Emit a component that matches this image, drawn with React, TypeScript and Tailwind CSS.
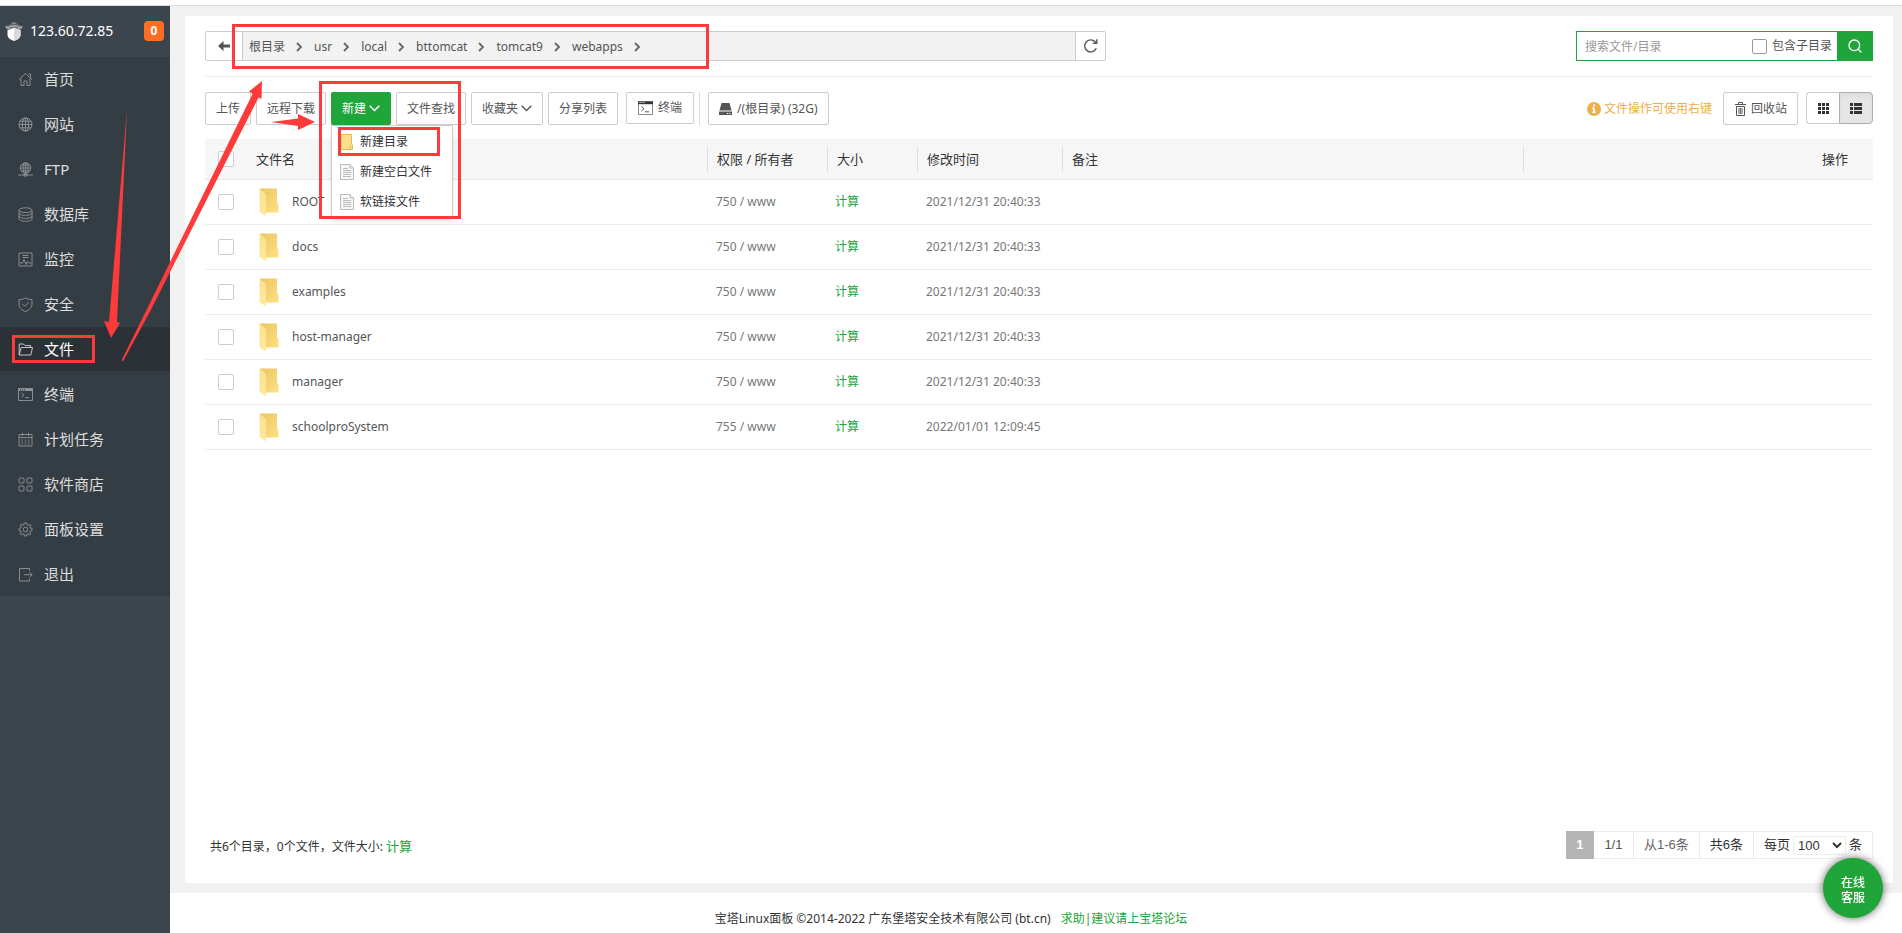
import React from 'react';
import { Search } from 'lucide-react';

interface MenuItem {
  label: string;
  icon: React.ReactNode;
  active?: boolean;
}

const menuItems: MenuItem[] = [
  { label: '首页', icon: <path d="M1 7.5 7.5 1.5 14 7.5M3 6.5V13.5H6V9H9V13.5H12V6.5M10.5 2H12.5V5.5" /> },
  {
    label: '网站',
    icon: (
      <>
        <circle cx="7.5" cy="7.5" r="6.5" />
        <ellipse cx="7.5" cy="7.5" rx="3.2" ry="6.5" />
        <path d="M7.5 1V14M1 7.5H14M2 4.2H13M2 10.8H13" />
      </>
    ),
  },
  {
    label: 'FTP',
    icon: (
      <>
        <circle cx="7.5" cy="6" r="5.2" />
        <ellipse cx="7.5" cy="6" rx="2.5" ry="5.2" />
        <path d="M7.5 1V11M2.3 6H12.7M3.2 3.2H11.8M3.2 8.8H11.8M0 13H15M6 12H9V14H6Z" />
      </>
    ),
  },
  {
    label: '数据库',
    icon: (
      <>
        <ellipse cx="7.5" cy="3.2" rx="6.5" ry="2.4" />
        <path d="M1 3.2V12C1 13.3 3.9 14.3 7.5 14.3S14 13.3 14 12V3.2M1 6.1C1 7.4 3.9 8.4 7.5 8.4S14 7.4 14 6.1M1 9C1 10.3 3.9 11.4 7.5 11.4S14 10.3 14 9" />
      </>
    ),
  },
  { label: '监控', icon: <path d="M1 1H14V14H1ZM4.5 3.5H10.5M4.5 5.5H10.5M2 11H4.5L6 7.5 8 12.5 9.5 9.5 10.5 11H13" /> },
  { label: '安全', icon: <path d="M7.5 .8C9.5 2.2 11.5 2.6 14 2.6V7C14 10.5 11.5 13 7.5 14.5 3.5 13 1 10.5 1 7V2.6C3.5 2.6 5.5 2.2 7.5 .8ZM4.5 7 6.8 9.3 10.8 5.3" /> },
  { label: '文件', active: true, icon: <path d="M1.2 13V2H5.5L7 3.6H12.6V5.5M1.2 13 3.2 5.5H14.5L12.8 13Z" /> },
  {
    label: '终端',
    icon: (
      <>
        <path d="M.5 1.5H14.5V13.5H.5ZM3.5 6 6 8.2 3.5 10.4M7 10.6H11" />
        <path d="M.5 2.8H14.5" strokeWidth="2.4" strokeDasharray="1.5 .7 1.5 .7 1.5 .7 20" />
      </>
    ),
  },
  { label: '计划任务', icon: <path d="M1 2.5H14V14H1ZM1 5.5H14M4.5 .8V4M10.5 .8V4M3.5 8H5M6.8 8H8.3M10 8H11.5M3.5 10H5M6.8 10H8.3M10 10H11.5M3.5 12H5M6.8 12H8.3M10 12H11.5" /> },
  {
    label: '软件商店',
    icon: (
      <>
        <rect x="1" y="1" width="5" height="5" rx="1" />
        <rect x="9" y="1" width="5" height="5" rx="1" />
        <rect x="1" y="9" width="5" height="5" rx="1" />
        <rect x="9" y="9" width="5" height="5" rx="1" />
      </>
    ),
  },
  {
    label: '面板设置',
    icon: (
      <>
        <circle cx="7.5" cy="7.5" r="2.3" />
        <path d="M6.3 1H8.7L9.1 3 10.3 3.5 12 2.3 13 3.3 11.9 5 12.2 6 14 6.3V8.7L12.2 9.1 11.7 10.2 12.8 12 11.6 13 10 11.8 8.9 12.3 8.6 14H6.4L6 12.2 4.8 11.7 3.2 12.8 2.1 11.7 3.2 10 2.8 8.9 1 8.6V6.4L2.8 6 3.3 4.8 2.1 3.2 3.3 2.1 5 3.2 5.9 2.8Z" />
      </>
    ),
  },
  { label: '退出', icon: <path d="M11.5 4V1.5H1.5V14H11.5V11.5M6 7.7H14M11.5 5 14 7.7 11.5 10.4" /> },
];

const crumbs = ['根目录', 'usr', 'local', 'bttomcat', 'tomcat9', 'webapps'];

const files = [
  { name: 'ROOT', owner: '750 / www', time: '2021/12/31 20:40:33' },
  { name: 'docs', owner: '750 / www', time: '2021/12/31 20:40:33' },
  { name: 'examples', owner: '750 / www', time: '2021/12/31 20:40:33' },
  { name: 'host-manager', owner: '750 / www', time: '2021/12/31 20:40:33' },
  { name: 'manager', owner: '750 / www', time: '2021/12/31 20:40:33' },
  { name: 'schoolproSystem', owner: '755 / www', time: '2022/01/01 12:09:45' },
];

const BTN = 'h-[33px] px-[10px] border border-[#ccc] rounded-xs bg-white text-xs text-[#555] flex items-center whitespace-nowrap';
const CHECKBOX = 'block appearance-none size-4 border border-[#ccc] rounded-xs bg-white checked:bg-[#20a53a]';

const CrumbArrow = () => (
  <svg className="w-[13px] h-[10px] mx-2" viewBox="0 0 13 10" fill="none" stroke="#666" strokeWidth="1.8">
    <path d="M4 1 8 5 4 9" />
  </svg>
);

const DownArrow = () => (
  <svg className="w-[11px] h-[7px]" viewBox="0 0 11 7" fill="none" stroke="currentColor" strokeWidth="1.4">
    <path d="M.7 .8 5.5 5.6 10.3 .8" />
  </svg>
);

const TerminalIcon = () => (
  <svg className="w-[15px] h-[14px]" viewBox="0 0 15 14" fill="none" stroke="#555">
    <path d="M.5 1.5V13.5H14.5V1.5" stroke="#888" />
    <path d="M0 1.7H15" stroke="#333" strokeWidth="3" />
    <path d="M1.5 1.5H2.5M3.5 1.5H4.5M5.5 1.5H6.5" stroke="#fff" />
    <path d="M3.5 5.5 6 7.7 3.5 10M7 10.8H11" />
  </svg>
);

const FolderIcon = () => (
  <svg className="w-5 h-[29px] mt-px shrink-0" viewBox="0 0 20 29">
    <defs>
      <linearGradient id="folderBack" x1="0" y1="0" x2="1" y2="1">
        <stop offset="0" stopColor="#ebc55e" />
        <stop offset="1" stopColor="#fee084" />
      </linearGradient>
      <linearGradient id="folderFront" x1="0" y1="0" x2="0" y2="1">
        <stop offset="0" stopColor="#fce08c" />
        <stop offset="1" stopColor="#ffeaa0" />
      </linearGradient>
    </defs>
    <path d="M1 .5H18V14.5L19.5 17V24.5H6Z" fill="url(#folderBack)" />
    <path d="M.5 .5 7 6V28.5L.5 24Z" fill="url(#folderFront)" />
  </svg>
);

const DocIcon = () => (
  <svg className="w-[14px] h-4" viewBox="0 0 14 16" fill="none" stroke="#bbb">
    <path d="M.5 .5H10L13.5 4V15.5H.5Z" fill="#f7f7f7" />
    <path d="M10 .5V4H13.5M3 4.5H8M3 6.5H11M3 8.5H11M3 10.5H11M3 12.5H11" />
  </svg>
);

const SmallFolderIcon = () => (
  <svg className="w-[14px] h-4" viewBox="0 0 14 16">
    <path d="M1 .5H11.5V10L12.5 11V15.5H1Z" fill="#fde18c" stroke="#e2bd55" />
    <path d="M10.5 11V15" stroke="#e2bd55" />
  </svg>
);

const Sidebar = () => (
  <aside className="w-[170px] shrink-0 bg-[#3c444d]">
    <div className="h-[51px] flex items-center pl-[5px] pr-[6px] pb-3">
      <svg className="w-[18px] h-[19px] mt-3" viewBox="0 0 18 19">
        <path d="M0 4.5 5 2.5 9 0 13 2.5 18 4.5 16.5 7H1.5Z" fill="#989da2" />
        <path d="M2 4 9 2 16 4M5 6H13" stroke="#4b525a" fill="none" />
        <path d="M2.5 8 9 6 15.5 8V13C15.5 16 12 18 9 19 6 18 2.5 16 2.5 13Z" fill="#fff" />
        <path d="M9 6 15.5 8V13C15.5 16 12 18 9 19Z" fill="#d9dadb" />
      </svg>
      <span className="pl-[7px] pt-[10px] grow text-sm text-white">123.60.72.85</span>
      <span className="mt-[10px] size-5 rounded bg-[#ff6c23] text-white text-xs font-bold flex items-center justify-center">0</span>
    </div>
    <nav className="bg-[#353d44]">
      <ul className="flex flex-col gap-px">
        {menuItems.map((item) => (
          <li key={item.label}>
            <a
              href="#"
              className={`h-11 flex items-center gap-[11px] pl-[18px] text-[15px] ${item.active ? 'bg-[#2c3138] text-white' : 'text-[#ddd]'}`}
            >
              <svg
                className="size-[15px]"
                viewBox="0 0 15 15"
                fill="none"
                stroke={item.active ? '#d5d7d9' : '#91969a'}
                strokeWidth={0.9}
              >
                {item.icon}
              </svg>
              {item.label}
            </a>
          </li>
        ))}
      </ul>
    </nav>
  </aside>
);

const PathBar = () => (
  <div className="flex justify-between pb-[15px] border-b border-[#eee]">
    <div className="flex h-[30px] w-[901px] border border-[#ccc] rounded-xs">
      <button aria-label="后退" className="w-[37px] flex items-center justify-center border-r border-[#ccc]">
        <svg className="w-3 h-[10px]" viewBox="0 0 12 10">
          <path d="M0 5 5.5 0V3.5H12V6.5H5.5V10Z" fill="#555" />
        </svg>
      </button>
      <div className="grow flex items-center bg-[#f2f2f2] pl-[6px] pt-px text-xs text-[#555]">
        {crumbs.map((crumb) => (
          <a key={crumb} href="#" className="flex items-center">
            {crumb}
            <CrumbArrow />
          </a>
        ))}
      </div>
      <button aria-label="刷新" className="w-[30px] flex items-center justify-center border-l border-[#ccc]">
        <svg className="size-[14px]" viewBox="0 0 14 14" fill="none" stroke="#555" strokeWidth="1.4">
          <path d="M12.3 9.2A6 6 0 1 1 11 2.6L12.6 4" />
          <path d="M12.8 .3V4.3H8.8" />
        </svg>
      </button>
    </div>
    <div className="flex h-[30px] border border-[#20a53a] text-xs text-[#555]">
      <input
        aria-label="搜索"
        placeholder="搜索文件/目录"
        className="w-[175px] pl-2 pt-px outline-none placeholder:text-[#999]"
      />
      <label className="flex items-center gap-[5px] pr-[5px]">
        <input type="checkbox" className="appearance-none size-[15px] border border-[#999] rounded-xs checked:bg-[#20a53a]" />
        包含子目录
      </label>
      <button aria-label="搜索" className="w-[35px] bg-[#20a53a] text-white flex items-center justify-center">
        <Search className="size-4" strokeWidth={2} />
      </button>
    </div>
  </div>
);

const Toolbar = () => (
  <div className="flex justify-between pt-[15px] pb-[14px]">
    <div className="flex gap-[5px]">
      <button className={BTN}>上传</button>
      <button className={BTN}>远程下载</button>
      <div className="relative">
        <button className="h-[33px] px-[11px] rounded-xs bg-[#20a53a] text-white text-xs flex items-center gap-[3px]">
          新建
          <DownArrow />
        </button>
        {/* menu opened by the button above */}
        <ul className="absolute z-10 top-[33px] left-0 w-[122px] pt-px border border-[#ccc] bg-white shadow-md text-xs text-[#333]">
          <li className="h-[30px]">
            <a href="#" className="h-full pl-2 flex items-center gap-[6px]"><SmallFolderIcon />新建目录</a>
          </li>
          <li className="h-[30px]">
            <a href="#" className="h-full pl-2 flex items-center gap-[6px]"><DocIcon />新建空白文件</a>
          </li>
          <li className="h-[30px]">
            <a href="#" className="h-full pl-2 flex items-center gap-[6px]"><DocIcon />软链接文件</a>
          </li>
        </ul>
      </div>
      <button className={BTN}>文件查找</button>
      <button className={`${BTN} gap-[3px]`}>
        收藏夹
        <DownArrow />
      </button>
      <button className={BTN}>分享列表</button>
      <button className="ml-[3px] h-8 px-[11px] border border-[#ccc] rounded-xs text-xs text-[#555] flex items-center gap-[5px]">
        <TerminalIcon />
        终端
      </button>
      <span className="w-px bg-[#ddd]" />
      <button className={`${BTN} ml-[3px] gap-[5px]`}>
        <svg className="w-[13px] h-3" viewBox="0 0 13 12" fill="#555">
          <path d="M2.5 0H10.5L12.5 7.5H.5Z" />
          <path d="M0 8.5H13V12H0ZM8 10H9.2V10.9H8ZM10.2 10H11.4V10.9H10.2Z" fillRule="evenodd" />
        </svg>
        /(根目录) (32G)
      </button>
    </div>
    <div className="flex">
      <span className="flex items-center gap-[3px] pr-[11px] pt-px text-xs text-[#f0ad4e]">
        <svg className="size-[14px]" viewBox="0 0 14 14">
          <circle cx="7" cy="7" r="7" fill="#f0ad4e" />
          <path d="M6 2.5H8V4.300H6ZM5 5.500H8V9.700H9V11H5V9.700H6V6.800H5Z" fill="#fff" />
        </svg>
        文件操作可使用右键
      </span>
      <button className={`${BTN} gap-1`}>
        <svg className="w-[13px] h-[14px]" viewBox="0 0 13 14" fill="none" stroke="#555">
          <path d="M4.500 2.500V.5H8.500V2.500M1 2.500H12M2.500 4.500H10.500V13.500H2.500ZM5 6V12M8 6V12" />
          <path d="M6.500 6V12" strokeWidth=".8" />
        </svg>
        回收站
      </button>
      <div className="ml-2 flex h-8">
        <button aria-label="网格视图" className="w-[33px] border border-r-0 border-[#ccc] rounded-l flex items-center justify-center">
          <svg className="size-[11px]" viewBox="0 0 11 11" fill="#333">
            <path d="M0 0H3V3H0ZM4 0H7V3H4ZM8 0H11V3H8ZM0 4H3V7H0ZM4 4H7V7H4ZM8 4H11V7H8ZM0 8H3V11H0ZM4 8H7V11H4ZM8 8H11V11H8Z" />
          </svg>
        </button>
        <button aria-label="列表视图" className="w-[34px] border border-[#adadad] rounded-r bg-[#e6e6e6] shadow-inner flex items-center justify-center">
          <svg className="w-3 h-[11px]" viewBox="0 0 12 11" fill="#333">
            <path d="M0 0H3V3H0ZM4 0H12V3H4ZM0 4H3V7H0ZM4 4H12V7H4ZM0 8H3V11H0ZM4 8H12V11H4Z" />
          </svg>
        </button>
      </div>
    </div>
  </div>
);

const HeadCell = ({ children }: { children?: React.ReactNode }) => (
  <th className="p-0 font-normal text-left">
    <div className="h-[25px] pl-[9px] pt-px border-l border-[#ddd] flex items-center">{children}</div>
  </th>
);

const FileTable = () => (
  <table className="w-full table-fixed border-separate border-spacing-0 text-xs text-[#666]">
    <colgroup>
      <col className="w-[46px]" />
      <col className="w-[456px]" />
      <col className="w-[120px]" />
      <col className="w-[90px]" />
      <col className="w-[145px]" />
      <col />
      <col className="w-[350px]" />
    </colgroup>
    <thead>
      <tr className="h-[41px] bg-[#f6f6f6] text-[13px] text-[#333] [&>th]:border-b [&>th]:border-[#e8e8e8]">
        <th className="p-0 pl-[13px]"><input type="checkbox" aria-label="全选" className={CHECKBOX} /></th>
        <th className="p-0 pl-[5px] pt-px font-normal text-left">文件名</th>
        <HeadCell>权限 / 所有者</HeadCell>
        <HeadCell>大小</HeadCell>
        <HeadCell>修改时间</HeadCell>
        <HeadCell>备注</HeadCell>
        <th className="p-0 font-normal">
          <div className="h-[25px] pr-[25px] pt-px border-l border-[#ddd] flex items-center justify-end">操作</div>
        </th>
      </tr>
    </thead>
    <tbody>
      {files.map((file) => (
        <tr key={file.name} className="h-[45px] [&>td]:border-b [&>td]:border-[#eee]">
          <td className="p-0 pl-[13px]"><input type="checkbox" aria-label={file.name} className={CHECKBOX} /></td>
          <td className="p-0 pl-2">
            <a href="#" className="flex items-center gap-[13px] text-[#555]">
              <FolderIcon />
              {file.name}
            </a>
          </td>
          <td className="p-0 pl-[9px] text-[#777]">{file.owner}</td>
          <td className="p-0 pl-2"><a href="#" className="text-[#20a53a]">计算</a></td>
          <td className="p-0 pl-[9px] text-[#777]">{file.time}</td>
          <td />
          <td />
        </tr>
      ))}
    </tbody>
  </table>
);

const Pagination = () => (
  <div className="flex h-7 border border-[#ececec] text-[13px] font-['Liberation_Sans','Noto_Sans_CJK_SC',sans-serif] text-[#333]">
    <span className="-my-px -ml-px w-7 bg-[#b5b5b5] text-white font-bold flex items-center justify-center">1</span>
    <span className="w-10 border-r border-[#ececec] text-[#555] flex items-center justify-center">1/1</span>
    <span className="px-[10px] border-r border-[#ececec] text-[#666] flex items-center">从1-6条</span>
    <span className="px-[10px] border-r border-[#ececec] flex items-center">共6条</span>
    <label className="px-[10px] flex items-center gap-[3px]">
      每页
      <select className="w-[53px] h-[19px] border border-[#ececec] rounded-xs bg-white" defaultValue="100">
        <option>100</option>
        <option>200</option>
        <option>500</option>
      </select>
      条
    </label>
  </div>
);

// Red boxes and arrows that lead from the sidebar to the path and the new-file menu
const Annotations = () => (
  <svg className="absolute z-20 top-0 left-0 w-[720px] h-[380px] pointer-events-none" viewBox="0 0 720 380" aria-hidden="true">
    <g fill="none" stroke="#fd3b3b" strokeWidth="3">
      <rect x="233.5" y="25.5" width="474" height="42" />
      <rect x="320.5" y="82.5" width="139" height="135" />
      <rect x="339.5" y="128.5" width="99" height="26" />
      <rect x="13.5" y="336.5" width="80" height="25" />
    </g>
    <g fill="#fd3b3b">
      <path d="M127 110 117 322 120 323 111 338 104 321 109 322Z" />
      <path d="M121.5 360.5 146.500 310 252.500 94 249 91.500 262 81 261.500 99 258.500 97.500 150.300 311 123 361.300Z" />
      <path d="M271 122 298 118.500V114L315 122 298 130V126Z" />
    </g>
  </svg>
);

export default function App() {
  return (
    <div className="relative min-h-screen flex flex-col bg-white font-['Noto_Sans','Noto_Sans_CJK_SC',sans-serif]">
      <div className="h-[6px] border-b border-[#ddd]" />
      <div className="grow flex">
        <Sidebar />
        <div className="grow flex flex-col">
          <main className="grow flex flex-col bg-[#f1f1f1] pt-[10px] pb-[10px] pl-[15px] pr-[9px]">
            <div className="grow flex flex-col bg-white px-5 pt-[15px] pb-6">
              <PathBar />
              <Toolbar />
              <FileTable />
              <div className="mt-auto flex items-center justify-between">
                <p className="pl-[5px] pt-[3px] text-xs text-[#333]">
                  共6个目录，0个文件，文件大小: <a href="#" className="text-[13px] text-[#20a53a]">计算</a>
                </p>
                <Pagination />
              </div>
            </div>
          </main>
          <footer className="h-10 pt-3 pr-[170px] flex items-center justify-center gap-[10px] text-xs text-[#333]">
            <span>宝塔Linux面板 ©2014-2022 广东堡塔安全技术有限公司 (bt.cn)</span>
            <a href="#" className="text-[#20a53a]">求助|建议请上宝塔论坛</a>
          </footer>
        </div>
      </div>
      <button className="fixed z-30 right-[19px] bottom-[15px] size-[60px] pt-[3px] rounded-full bg-[#20a53a] text-white text-xs font-medium leading-[15px] shadow-[0_0_8px_rgba(0,0,0,0.6)]">
        在线<br />客服
      </button>
      <Annotations />
    </div>
  );
}
